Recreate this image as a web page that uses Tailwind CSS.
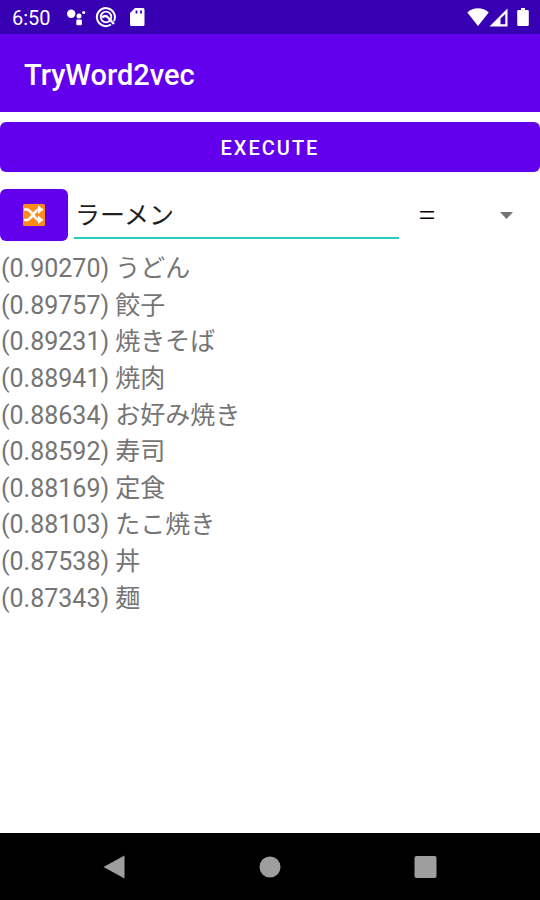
<!doctype html>
<html lang="ja">
    <head>
        <meta charset="UTF-8" />
        <meta name="viewport" content="width=device-width, initial-scale=1.0" />
        <title>TryWord2vec</title>
        <script src="https://cdn.jsdelivr.net/npm/@tailwindcss/browser@4"></script>
    </head>
    <body
        class="flex flex-col min-h-screen bg-white font-[Roboto,'Noto_Sans_CJK_JP',sans-serif]"
    >
        <!-- status bar -->
        <div
            class="flex items-center h-[34px] pl-3 pr-2 bg-[#3700b3] text-white"
        >
            <span class="text-[20px] leading-6 pt-0.5">6:50</span>
            <svg class="w-5 h-5 ml-4" viewBox="0 0 20 20" fill="currentColor">
                <circle cx="4.2" cy="6.8" r="4.2" />
                <circle cx="12" cy="9" r="2.5" />
                <circle cx="16.7" cy="5.5" r="1.6" />
                <rect x="9.300" y="12.600" width="5.600" height="5.600" rx="1.200" />
            </svg>
            <svg
                class="w-[22px] h-[22px] ml-2"
                viewBox="0 0 22 22"
                fill="none"
                stroke="currentColor"
            >
                <path d="M16 18.500A9 9 0 1 1 19 15" stroke-width="2" />
                <circle cx="11" cy="11" r="5.300" stroke-width="1.800" />
                <path d="M7 11.500q3.500-3 6 0l6 6.500" stroke-width="2.400" />
            </svg>
            <svg class="w-4 h-5 ml-3" viewBox="0 0 16 20">
                <path
                    fill="currentColor"
                    d="M6 1h8a1.500 1.500 0 0 1 1.500 1.500v15a1.500 1.500 0 0 1-1.500 1.500H2.500A1.500 1.500 0 0 1 1 17.500V6z"
                />
                <path
                    class="stroke-[#3700b3]"
                    stroke-width="1.800"
                    d="M7.500 3.500v3M12 3.500v3"
                />
            </svg>
            <svg
                class="w-[22px] h-5 ml-auto"
                viewBox="0 0 22 20"
                fill="currentColor"
            >
                <path d="M11 19L0.300 5.500C3.500 2.500 7 1.300 11 1.300s7.500 1.200 10.700 4.200z" />
            </svg>
            <svg class="w-5 h-5" viewBox="0 0 20 20">
                <path
                    fill="currentColor"
                    fill-rule="evenodd"
                    d="M0.500 19.500L18.500 1.500v18zM11.500 11.500V17.300h4.800V7z"
                />
            </svg>
            <svg
                class="w-3 h-5 ml-2 mr-[3px]"
                viewBox="0 0 12 20"
                fill="currentColor"
            >
                <path
                    d="M4 1h4v2h2.500a1.300 1.300 0 0 1 1.300 1.300v13.400a1.300 1.300 0 0 1-1.300 1.300h-9a1.300 1.300 0 0 1-1.300-1.300V4.300A1.300 1.300 0 0 1 1.500 3H4z"
                />
            </svg>
        </div>

        <!-- app bar -->
        <header class="flex items-center h-[78px] px-6 pt-1 bg-[#6200ee]">
            <h1 class="text-[29px] leading-8 font-medium text-white">
                TryWord2vec
            </h1>
        </header>

        <main class="flex flex-col flex-1 pt-[10px]">
            <button
                type="button"
                class="w-full h-[50px] pt-0.5 rounded-md bg-[#6200ee] text-white text-[20px] font-medium tracking-widest"
            >
                EXECUTE
            </button>

            <!-- word row -->
            <div class="flex items-center h-[52px] mt-[17px]">
                <button
                    type="button"
                    aria-label="Shuffle"
                    class="flex items-center justify-center w-[68px] h-full rounded-md bg-[#6200ee]"
                >
                    <svg class="w-[22px] h-[22px]" viewBox="0 0 22 22">
                        <rect width="22" height="22" rx="1.500" fill="#fb8c1c" />
                        <path
                            d="M2 5.500h2C8.500 5.500 11.500 16 16 16h1M2 16h2C8.500 16 11.500 5.500 16 5.500h1"
                            fill="none"
                            stroke="#fff"
                            stroke-width="2.600"
                            stroke-linecap="round"
                        />
                        <path
                            d="M15 1.500l5.500 4-5.500 4.500zM15 11.500l5.500 4.500-5.500 4z"
                            fill="#fff"
                        />
                    </svg>
                </button>
                <input
                    type="text"
                    aria-label="Word"
                    value="ラーメン"
                    class="flex-1 min-w-0 h-[50px] ml-[6px] pl-px self-start border-b-2 border-[#26cdb9] text-[25px] text-[#1f1f1f] outline-none"
                />
                <span
                    class="w-14 pb-1 text-center text-[30px] leading-9 font-light font-['Noto_Sans_CJK_JP',sans-serif] text-black"
                    >=</span
                >
                <div class="relative w-[85px] h-full">
                    <select
                        aria-label="Operator"
                        class="w-full h-full appearance-none bg-transparent outline-none"
                    >
                        <option value=""></option>
                    </select>
                    <svg
                        class="absolute right-[27px] top-[23px] w-[13px] h-[7px] pointer-events-none"
                        viewBox="0 0 13 7"
                    >
                        <path d="M0 0h13L6.500 7z" fill="#757575" />
                    </svg>
                </div>
            </div>

            <!-- similar words -->
            <ul
                class="grid h-[366px] mt-[10px] pl-px items-center text-[25px] leading-9 text-[#757575]"
            >
                <li>(0.90270) うどん</li>
                <li>(0.89757) 餃子</li>
                <li>(0.89231) 焼きそば</li>
                <li>(0.88941) 焼肉</li>
                <li>(0.88634) お好み焼き</li>
                <li>(0.88592) 寿司</li>
                <li>(0.88169) 定食</li>
                <li>(0.88103) たこ焼き</li>
                <li>(0.87538) 丼</li>
                <li>(0.87343) 麺</li>
            </ul>
        </main>

        <!-- navigation bar -->
        <nav
            class="grid grid-cols-[1fr_82px_1fr] items-center justify-items-center h-[67px] bg-black text-[#9e9e9e]"
        >
            <button type="button" aria-label="Back">
                <svg class="w-6 h-6" viewBox="0 0 24 24" fill="currentColor">
                    <path d="M0.500 12L21.500 0.500v23z" />
                </svg>
            </button>
            <button type="button" aria-label="Home">
                <svg class="w-6 h-6" viewBox="0 0 24 24" fill="currentColor">
                    <circle cx="12" cy="12" r="10.500" />
                </svg>
            </button>
            <button type="button" aria-label="Recents">
                <svg class="w-6 h-6" viewBox="0 0 24 24" fill="currentColor">
                    <rect x="0.500" y="1" width="22" height="22" rx="2" />
                </svg>
            </button>
        </nav>
    </body>
</html>
